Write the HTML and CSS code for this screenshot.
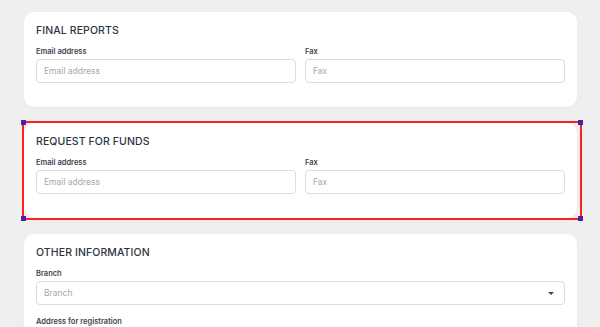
FILE: index.html
```html
<!DOCTYPE html>
<html lang="en">
<head>
  <meta charset="UTF-8">
  <meta name="viewport" content="width=device-width, initial-scale=1.0">
  <title>Contact Settings</title>
  <link rel="stylesheet" href="styles.css">
</head>
<body>
  <div class="page">
    <div class="card">
      <h2 class="card-title">FINAL REPORTS</h2>
      <div class="row">
        <div class="field">
          <label for="fr_email">Email address</label>
          <input type="text" id="fr_email" placeholder="Email address">
        </div>
        <div class="field">
          <label for="fr_fax">Fax</label>
          <input type="text" id="fr_fax" placeholder="Fax">
        </div>
      </div>
    </div>

    <div class="card selected">
      <h2 class="card-title">REQUEST FOR FUNDS</h2>
      <div class="row">
        <div class="field">
          <label for="rf_email">Email address</label>
          <input type="text" id="rf_email" placeholder="Email address">
        </div>
        <div class="field">
          <label for="rf_fax">Fax</label>
          <input type="text" id="rf_fax" placeholder="Fax">
        </div>
      </div>
      <div class="select-frame">
        <span class="handle tl"></span>
        <span class="handle tr"></span>
        <span class="handle bl"></span>
        <span class="handle br"></span>
      </div>
    </div>

    <div class="card">
      <h2 class="card-title">OTHER INFORMATION</h2>
      <div class="field">
        <label for="branch">Branch</label>
        <div class="select-box">
          <span class="placeholder">Branch</span>
          <span class="caret"></span>
        </div>
      </div>
      <div class="field">
        <label>Address for registration</label>
      </div>
    </div>
  </div>
</body>
</html>
```

FILE: styles.css
```css
body {
  margin: 0;
  background-color: #efefef;
  font-family: Inter, "Liberation Sans", sans-serif;
  color: #2d3440;
}
.page {
  padding: 12px 23px 0 24px;
  display: flex;
  flex-direction: column;
  gap: 16px;
}
.card {
  position: relative;
  background-color: white;
  border-radius: 10px;
  box-shadow: 0 1px 3px rgba(0, 0, 0, 0.04);
  padding: 12px 12px 24px 12px;
}
.card-title {
  margin: 0 0 9px 0;
  font-size: 10.5px;
  font-weight: 500;
  letter-spacing: 0.1px;
  line-height: 14px;
}
.row {
  display: flex;
  gap: 9px;
}
.field {
  flex: 1;
  display: flex;
  flex-direction: column;
}
label {
  font-size: 7.5px;
  font-weight: 600;
  color: #3d4450;
  line-height: 10px;
  margin-bottom: 2px;
}
input, .select-box {
  box-sizing: border-box;
  height: 24px;
  border: 1px solid #dcdcdc;
  border-radius: 4px;
  padding: 0 7px;
  font-family: inherit;
  font-size: 8.5px;
  color: #2d3440;
  background: white;
}
input::placeholder {
  color: #a3a9b1;
}
.select-box {
  display: flex;
  align-items: center;
  justify-content: space-between;
  margin-bottom: 12px;
}
.placeholder {
  color: #a3a9b1;
}
.caret {
  width: 0;
  height: 0;
  border-left: 3px solid transparent;
  border-right: 3px solid transparent;
  border-top: 3px solid #3d4450;
  margin-right: 3px;
}
/* editor selection overlay */
.select-frame {
  position: absolute;
  left: -2px;
  top: -2px;
  right: -5px;
  bottom: -2px;
  border: 2px solid #ff1f1f;
  pointer-events: none;
}
.handle {
  position: absolute;
  width: 5px;
  height: 5px;
  background-color: #4b1fa8;
}
.handle.tl { left: -3px; top: -3px; }
.handle.tr { right: -3px; top: -3px; }
.handle.bl { left: -3px; bottom: -3px; }
.handle.br { right: -3px; bottom: -3px; }
```
